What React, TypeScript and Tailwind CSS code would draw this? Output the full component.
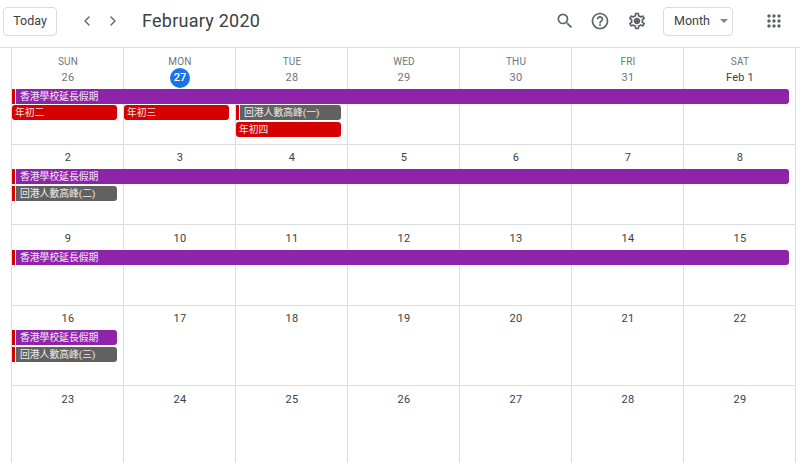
import React from "react";
import { ChevronLeft, ChevronRight } from "lucide-react";

const FONT = "font-['Roboto','Noto_Sans_CJK_TC',sans-serif]";

type Ev = { col: string; span: string; row: string; text: string; color: string; marker?: boolean; extra?: string };

const purple = "bg-[#8e24aa]";
const red = "bg-[#d50000]";
const gray = "bg-[#616161]";

const COL_CELL = ["col-start-1", "col-start-2", "col-start-3", "col-start-4", "col-start-5", "col-start-6", "col-start-7"];

function Event({ e }: { e: Ev }) {
  return (
    <div className={`${e.col} ${e.span} ${e.row} ${e.extra ?? ""} z-10 ml-[1px] mr-[6px] mb-[1px] flex h-[15px] min-w-0`}>
      {e.marker && <div className="mr-[1px] h-full w-[3px] shrink-0 bg-[#d50000]" />}
      <div
        className={`${e.color} rounded-[3px] ${e.marker ? "rounded-l-none pl-[4px]" : "pl-[3px]"} h-full min-w-0 flex-1 overflow-hidden whitespace-nowrap text-[9.8px] leading-[15px] text-white/90`}
      >
        {e.text}
      </div>
    </div>
  );
}

function Week({
  days,
  events,
  height,
  top,
  headers,
}: {
  days: { t: string; today?: boolean; dark?: boolean }[];
  events: Ev[];
  height: string;
  top: string;
  headers?: string[];
}) {
  return (
    <div className={`grid ${height} grid-cols-[repeat(7,112px)] grid-rows-[auto_16px_16px_1fr] border-b border-[#dadce0]`}>
      {days.map((_, i) => (
        <div key={i} className={`${COL_CELL[i]} row-start-1 row-end-5 border-l border-[#dadce0]`} />
      ))}
      {days.map((d, i) => (
        <div key={"d" + i} className={`${COL_CELL[i]} row-start-1 z-10 flex flex-col items-center pl-[2px] ${top}`}>
          {headers && <div className="h-[13px] text-[10px] leading-[13px] tracking-[0.2px] text-[#70757a]">{headers[i]}</div>}
          {d.today ? (
            <div className="flex h-5 w-5 items-center justify-center rounded-full bg-[#1a73e8] text-[11px] font-medium text-white">{d.t}</div>
          ) : (
            <div className={`h-5 text-[11px] leading-5 tracking-[0.2px] ${d.dark ? "text-[#3c4043]" : "text-[#70757a]"}`}>{d.t}</div>
          )}
        </div>
      ))}
      {events.map((e, i) => (
        <Event key={i} e={e} />
      ))}
    </div>
  );
}

const dk = (arr: string[]) => arr.map((t) => ({ t, dark: true }));

export default function App() {
  return (
    <div className={`${FONT} h-[463px] w-[800px] overflow-hidden bg-white`}>
      <header className="flex h-[48px] items-center border-b border-[#dadce0] pb-[5px] pl-[3px]">
        <button className="h-[29px] w-[54px] rounded-[4px] border border-[#dadce0] text-[12.5px] font-normal text-[#3c4043]">Today</button>
        <div className="ml-[22px] flex items-center gap-[10px] text-[#5f6368]">
          <ChevronLeft size={16} strokeWidth={2} />
          <ChevronRight size={16} strokeWidth={2} />
        </div>
        <h1 className="ml-[21px] text-[18px] font-normal leading-6 tracking-[0.25px] text-[#3c4043]">February 2020</h1>
        <div className="ml-auto flex items-center">
          <svg viewBox="0 0 24 24" className="h-5 w-5 fill-[#5f6368]">
            <path d="M15.5 14h-.79l-.28-.27A6.471 6.471 0 0 0 16 9.5 6.5 6.5 0 1 0 9.5 16c1.61 0 3.09-.59 4.23-1.57l.27.28v.79l5 4.99L20.49 19l-4.99-5zm-6 0C7.01 14 5 11.99 5 9.5S7.01 5 9.5 5 14 7.01 14 9.5 11.99 14 9.5 14z" />
          </svg>
          <svg viewBox="0 0 24 24" className="ml-[15px] h-5 w-5 fill-[#5f6368]">
            <path d="M11 18h2v-2h-2v2zm1-16C6.48 2 2 6.48 2 12s4.48 10 10 10 10-4.48 10-10S17.52 2 12 2zm0 18c-4.41 0-8-3.59-8-8s3.59-8 8-8 8 3.59 8 8-3.59 8-8 8zm0-14c-2.21 0-4 1.79-4 4h2c0-1.1.9-2 2-2s2 .9 2 2c0 2-3 1.75-3 5h2c0-2.25 3-2.5 3-5 0-2.21-1.79-4-4-4z" />
          </svg>
          <svg viewBox="0 0 24 24" className="ml-[17px] h-5 w-5 fill-[#5f6368]">
            <path d="M19.43 12.98c.04-.32.07-.64.07-.98s-.03-.66-.07-.98l2.11-1.65c.19-.15.24-.42.12-.64l-2-3.46c-.12-.22-.39-.3-.61-.22l-2.49 1c-.52-.4-1.08-.73-1.69-.98l-.38-2.65C14.46 2.18 14.25 2 14 2h-4c-.25 0-.46.18-.49.42l-.38 2.65c-.61.25-1.17.59-1.69.98l-2.49-1c-.23-.09-.49 0-.61.22l-2 3.46c-.13.22-.07.49.12.64l2.11 1.65c-.04.32-.07.65-.07.98s.03.66.07.98l-2.11 1.65c-.19.15-.24.42-.12.64l2 3.46c.12.22.39.3.61.22l2.49-1c.52.4 1.08.73 1.69.98l.38 2.65c.03.24.24.42.49.42h4c.25 0 .46-.18.49-.42l.38-2.65c.61-.25 1.17-.59 1.69-.98l2.49 1c.23.09.49 0 .61-.22l2-3.46c.12-.22.07-.49-.12-.64l-2.11-1.65zM17.45 11.27c.04.31.05.52.05.73 0 .21-.02.43-.05.73l-.14 1.13.89.7 1.08.84-.7 1.21-1.27-.51-1.04-.42-.9.68c-.43.32-.84.56-1.25.73l-1.06.43-.16 1.13-.2 1.35h-1.4l-.19-1.35-.16-1.13-1.06-.43c-.43-.18-.83-.41-1.23-.71l-.91-.7-1.06.43-1.27.51-.7-1.21 1.08-.84.89-.7-.14-1.13c-.03-.31-.05-.54-.05-.74s.02-.43.05-.73l.14-1.13-.89-.7-1.08-.84.7-1.21 1.27.51 1.04.42.9-.68c.43-.32.84-.56 1.25-.73l1.06-.43.16-1.13.2-1.35h1.39l.19 1.35.16 1.13 1.06.43c.43.18.83.41 1.23.71l.91.7 1.06-.43 1.27-.51.7 1.21-1.07.85-.89.7.14 1.13zM12 8c-2.21 0-4 1.79-4 4s1.79 4 4 4 4-1.79 4-4-1.79-4-4-4z" />
          </svg>
          <div className="ml-[16px] flex h-[29px] w-[70px] items-center rounded-[4px] border border-[#dadce0] pl-[10px] text-[12.5px] text-[#3c4043]">
            Month
            <span className="ml-[10px] h-0 w-0 border-x-[4px] border-t-[4px] border-x-transparent border-t-[#80868b]" />
          </div>
          <svg viewBox="0 0 24 24" className="ml-[31px] mr-[16px] h-5 w-5 fill-[#5f6368]">
            <path d="M6 8c1.1 0 2-.9 2-2s-.9-2-2-2-2 .9-2 2 .9 2 2 2zm6 12c1.1 0 2-.9 2-2s-.9-2-2-2-2 .9-2 2 .9 2 2 2zm-6 0c1.1 0 2-.9 2-2s-.9-2-2-2-2 .9-2 2 .9 2 2 2zm0-6c1.1 0 2-.9 2-2s-.9-2-2-2-2 .9-2 2 .9 2 2 2zm6 0c1.1 0 2-.9 2-2s-.9-2-2-2-2 .9-2 2 .9 2 2 2zm6-10c-1.1 0-2 .9-2 2s.9 2 2 2 2-.9 2-2-.9-2-2-2zm-6 4c1.1 0 2-.9 2-2s-.9-2-2-2-2 .9-2 2 .9 2 2 2zm6 6c1.1 0 2-.9 2-2s-.9-2-2-2-2 .9-2 2 .9 2 2 2zm0 6c1.1 0 2-.9 2-2s-.9-2-2-2-2 .9-2 2 .9 2 2 2z" />
          </svg>
        </div>
      </header>
      <main className="ml-[11px] w-[785px] border-r border-[#dadce0]">
        <Week
          height="h-[97px]"
          top="pt-[7px] pb-[1px]"
          headers={["SUN", "MON", "TUE", "WED", "THU", "FRI", "SAT"]}
          days={[{ t: "26" }, { t: "27", today: true }, { t: "28" }, { t: "29" }, { t: "30" }, { t: "31" }, { t: "Feb 1", dark: true }]}
          events={[
            { col: "col-start-1", span: "col-span-7", row: "row-start-2", text: "香港學校延長假期", color: purple, marker: true },
            { col: "col-start-1", span: "col-span-1", row: "row-start-3", text: "年初二", color: red },
            { col: "col-start-2", span: "col-span-1", row: "row-start-3", text: "年初三", color: red },
            { col: "col-start-3", span: "col-span-1", row: "row-start-3", text: "回港人數高峰(一)", color: gray, marker: true },
            { col: "col-start-3", span: "col-span-1", row: "row-start-4", text: "年初四", color: red, extra: "mt-[1px]" },
          ]}
        />
        <Week
          height="h-[80px]"
          top="pt-[3px] pb-[1px]"
          days={dk(["2", "3", "4", "5", "6", "7", "8"])}
          events={[
            { col: "col-start-1", span: "col-span-7", row: "row-start-2", text: "香港學校延長假期", color: purple, marker: true },
            { col: "col-start-1", span: "col-span-1", row: "row-start-3", text: "回港人數高峰(二)", color: gray, marker: true, extra: "mt-[1px]" },
          ]}
        />
        <Week
          height="h-[81px]"
          top="pt-[4px] pb-[1px]"
          days={dk(["9", "10", "11", "12", "13", "14", "15"])}
          events={[{ col: "col-start-1", span: "col-span-7", row: "row-start-2", text: "香港學校延長假期", color: purple, marker: true }]}
        />
        <Week
          height="h-[80px]"
          top="pt-[3px] pb-[1px]"
          days={dk(["16", "17", "18", "19", "20", "21", "22"])}
          events={[
            { col: "col-start-1", span: "col-span-1", row: "row-start-2", text: "香港學校延長假期", color: purple, marker: true },
            { col: "col-start-1", span: "col-span-1", row: "row-start-3", text: "回港人數高峰(三)", color: gray, marker: true, extra: "mt-[1px]" },
          ]}
        />
        <Week height="h-[81px]" top="pt-[4px] pb-[1px]" days={dk(["23", "24", "25", "26", "27", "28", "29"])} events={[]} />
      </main>
    </div>
  );
}
